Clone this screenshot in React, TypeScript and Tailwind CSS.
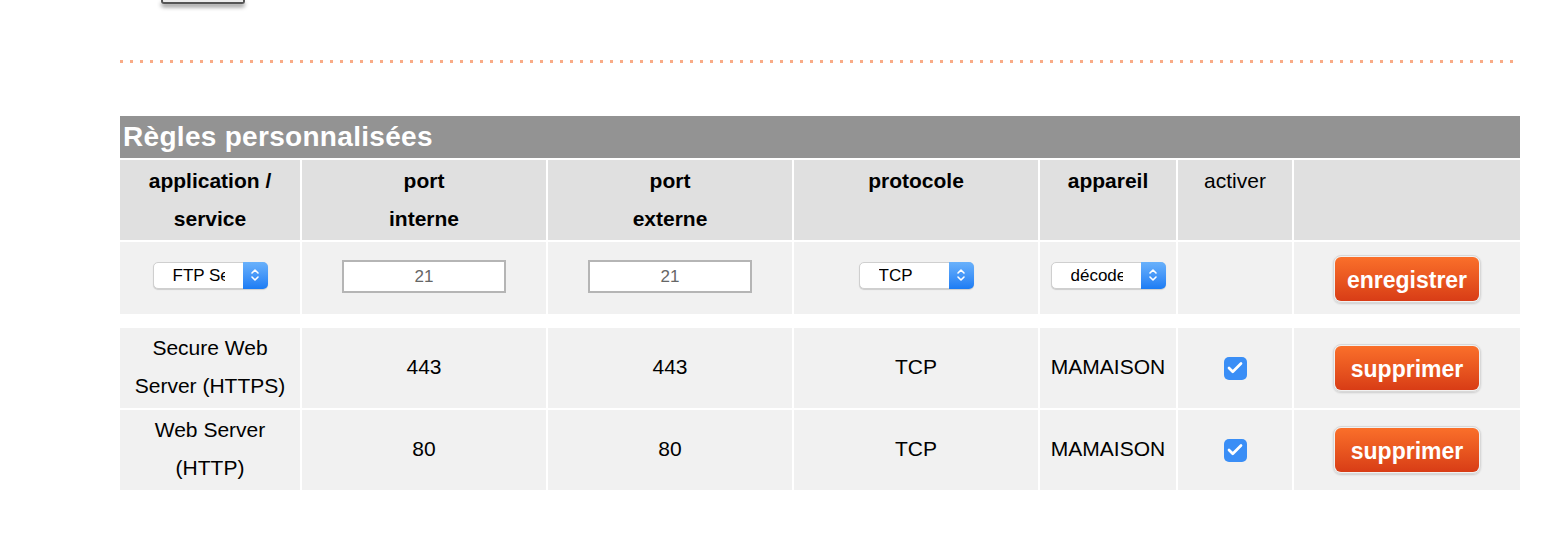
import { Check } from 'lucide-react'

const cols = 'grid grid-cols-[180px_244px_244px_244px_136px_114px_226px] gap-x-[2px]'

const rows = [
  { name: ['Secure Web', 'Server (HTTPS)'], internal: '443', external: '443', proto: 'TCP', device: 'MAMAISON' },
  { name: ['Web Server', '(HTTP)'], internal: '80', external: '80', proto: 'TCP', device: 'MAMAISON' },
]

function Chevrons() {
  return (
    <svg width="10" height="16" viewBox="0 0 10 16" fill="none" stroke="white" strokeWidth="1.6" strokeLinecap="round" strokeLinejoin="round">
      <path d="M2 6 L5 3 L8 6" />
      <path d="M2 10 L5 13 L8 10" />
    </svg>
  )
}

function FakeSelect({ label }: { label: string }) {
  return (
    <div className="flex h-[27px] w-[115px] rounded-[5px] border border-[#cfcfcf] bg-white shadow-[0_1px_1px_rgba(0,0,0,0.15)]">
      <div className="flex flex-1 items-center pl-[19px]">
        <span className="block w-[52px] overflow-hidden whitespace-nowrap text-[17px] leading-none text-black">
          {label}
        </span>
      </div>
      <div className="-my-px -mr-px flex w-[25px] items-center justify-center rounded-r-[5px] bg-gradient-to-b from-[#69b1fb] to-[#1b7cf4]">
        <Chevrons />
      </div>
    </div>
  )
}

function FakeInput({ value }: { value: string }) {
  return (
    <div className="flex h-[33px] w-[164px] items-center justify-center border-2 border-[#b5b5b5] bg-white pt-[2px] text-[17px] text-[#666]">
      {value}
    </div>
  )
}

function OrangeButton({ label }: { label: string }) {
  return (
    <div className="rounded-[8px] border border-[#d8d8d8] p-px shadow-[0_1px_2px_rgba(0,0,0,0.15)]">
      <div className="flex h-[44px] w-[144px] items-center justify-center rounded-[6px] bg-gradient-to-b from-[#fa6f2a] to-[#d83c16] pt-[2px] text-[23px] font-bold text-white">
        {label}
      </div>
    </div>
  )
}

function CheckedBox() {
  return (
    <div className="flex h-[23px] w-[23px] items-center justify-center rounded-[5px] bg-[#3a8ef6]">
      <Check className="h-[18px] w-[18px] text-white" strokeWidth={3.6} />
    </div>
  )
}

export default function App() {
  return (
    <div className="relative h-[544px] w-[1544px] overflow-hidden bg-white font-['Liberation_Sans',Arial,sans-serif] text-black">
      {/* bottom edge of a button above the fold */}
      <div className="ml-[161px] h-[4px] w-[84px] rounded-b-[3px] border-x-2 border-b-2 border-[#555] bg-[#ececec] shadow-[0_3px_4px_rgba(0,0,0,0.45)]" />

      {/* dotted separator */}
      <div className="ml-[120px] mt-[56px] h-[3px] w-[1400px] bg-[linear-gradient(to_right,#f9ab86_3px,transparent_3px)] bg-[length:10px_3px]" />

      <div className="ml-[120px] mt-[53px] w-[1400px]">
        <div className="flex h-[42px] items-center bg-[#939393] pl-[3px] text-[28px] font-bold tracking-[0.3px] text-white">
          Règles personnalisées
        </div>

        {/* header */}
        <div className={`${cols} mt-[2px] text-[21px] leading-[38px]`}>
          <div className="h-[80px] bg-[#e0e0e0] pt-[2px] text-center font-bold">application /<br />service</div>
          <div className="h-[80px] bg-[#e0e0e0] pt-[2px] text-center font-bold">port<br />interne</div>
          <div className="h-[80px] bg-[#e0e0e0] pt-[2px] text-center font-bold">port<br />externe</div>
          <div className="h-[80px] bg-[#e0e0e0] pt-[2px] text-center font-bold">protocole</div>
          <div className="h-[80px] bg-[#e0e0e0] pt-[2px] text-center font-bold">appareil</div>
          <div className="h-[80px] bg-[#e0e0e0] pt-[2px] text-center">activer</div>
          <div className="h-[80px] bg-[#e0e0e0]" />
        </div>

        {/* new rule */}
        <div className={`${cols} mt-[2px]`}>
          <div className="flex h-[72px] items-center justify-center bg-[#f1f1f1] pb-[6px]"><FakeSelect label="FTP Server" /></div>
          <div className="flex h-[72px] items-center justify-center bg-[#f1f1f1] pb-[4px]"><FakeInput value="21" /></div>
          <div className="flex h-[72px] items-center justify-center bg-[#f1f1f1] pb-[4px]"><FakeInput value="21" /></div>
          <div className="flex h-[72px] items-center justify-center bg-[#f1f1f1] pb-[6px]"><FakeSelect label="TCP" /></div>
          <div className="flex h-[72px] items-center justify-center bg-[#f1f1f1] pb-[6px]"><FakeSelect label="décodeur" /></div>
          <div className="h-[72px] bg-[#f1f1f1]" />
          <div className="flex h-[72px] items-center justify-center bg-[#f1f1f1] pt-[2px]"><OrangeButton label="enregistrer" /></div>
        </div>

        <div className="mt-[14px] flex flex-col gap-[2px]">
          {rows.map((r) => (
            <div key={r.name.join(' ')} className={`${cols} text-[21px] leading-[38px]`}>
              <div className="flex h-[80px] flex-col items-center justify-center bg-[#f1f1f1] pb-[2px] text-center">
                <span>{r.name[0]}</span>
                <span>{r.name[1]}</span>
              </div>
              <div className="flex h-[80px] items-center justify-center bg-[#f1f1f1] pb-[3px]">{r.internal}</div>
              <div className="flex h-[80px] items-center justify-center bg-[#f1f1f1] pb-[3px]">{r.external}</div>
              <div className="flex h-[80px] items-center justify-center bg-[#f1f1f1] pb-[3px]">{r.proto}</div>
              <div className="flex h-[80px] items-center justify-center bg-[#f1f1f1] pb-[3px]">{r.device}</div>
              <div className="flex h-[80px] items-center justify-center bg-[#f1f1f1]"><CheckedBox /></div>
              <div className="flex h-[80px] items-center justify-center bg-[#f1f1f1]"><OrangeButton label="supprimer" /></div>
            </div>
          ))}
        </div>
      </div>
    </div>
  )
}
